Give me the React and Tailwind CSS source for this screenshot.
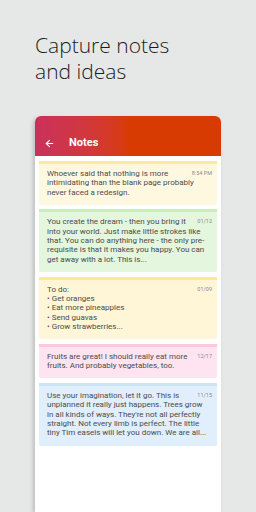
import { ArrowLeft } from 'lucide-react';

const NOTES = [
  {
    date: '8:54 PM',
    bg: 'bg-[#fff8e1]',
    bar: 'border-[#fdeb9c]',
    lines: ['Whoever said that nothing is more intimidating than the blank page probably never faced a redesign.'],
  },
  {
    date: '01/12',
    bg: 'bg-[#e4f6dd]',
    bar: 'border-[#c9edbd]',
    lines: ['You create the dream - then you bring it into your world. Just make little strokes like that. You can do anything here - the only pre-requisite is that it makes you happy. You can get away with a lot. This is...'],
  },
  {
    date: '01/09',
    bg: 'bg-[#fff6d8]',
    bar: 'border-[#fde993]',
    lines: ['To do:', '• Get oranges', '• Eat more pineapples', '• Send guavas', '• Grow strawberries...'],
  },
  {
    date: '12/17',
    bg: 'bg-[#fde4f0]',
    bar: 'border-[#fbc9df]',
    lines: ['Fruits are great! I should really eat more fruits. And probably vegetables, too.'],
  },
  {
    date: '11/15',
    bg: 'bg-[#e1effc]',
    bar: 'border-[#cbe5f1]',
    lines: ["Use your imagination, let it go. This is unplanned it really just happens. Trees grow in all kinds of ways. They're not all perfectly straight. Not every limb is perfect. The little tiny Tim easels will let you down. We are all..."],
  },
];

const NoteCard = ({ note }) => (
  <div className={`border-t-[3px] ${note.bar} ${note.bg} rounded-b-[2px] pl-2 pr-[10px] pt-[5px] pb-[8px]`}>
    <div className="text-[8px] leading-[9.33px] text-[#4b4b4b]">
      <span className="float-right -mr-[5px] ml-[4px] mt-[1px] text-[5.5px] leading-[6px] text-[#8a8a8a]">
        {note.date}
      </span>
      {note.lines.map((l, i) => (
        <p key={i}>{l}</p>
      ))}
    </div>
  </div>
);

export default function App() {
  return (
    <div
      className="w-[256px] h-[512px] overflow-hidden bg-[#e6e8e8] flex flex-col"
      style={{ fontFamily: 'Roboto, "Liberation Sans", sans-serif' }}
    >
      <h1
        className="pl-[35px] pt-[32px] text-[21px] leading-[26px] font-light text-[#1c1c1c]"
        style={{ fontFamily: '"Open Sans", sans-serif' }}
      >
        Capture notes
        <br />
        and ideas
      </h1>

      <div className="ml-[35px] mt-[32px] w-[186px] flex-1 bg-white rounded-t-[6px] shadow-[-2px_2px_4px_rgba(0,0,0,0.18)] overflow-hidden flex flex-col">
        <div className="h-[40px] shrink-0 bg-gradient-to-r from-[#c9315c] via-[#d83b01] to-[#d83b01] flex items-center pt-[14px]">
          <ArrowLeft size={11} strokeWidth={2.5} className="text-white ml-[9px]" />
          <span className="ml-[14px] text-white font-bold text-[11px]">Notes</span>
        </div>
        <div className="flex flex-col gap-[4.5px] px-[4px] pt-[5px]">
          {NOTES.map((n) => (
            <NoteCard key={n.date} note={n} />
          ))}
        </div>
      </div>
    </div>
  );
}
